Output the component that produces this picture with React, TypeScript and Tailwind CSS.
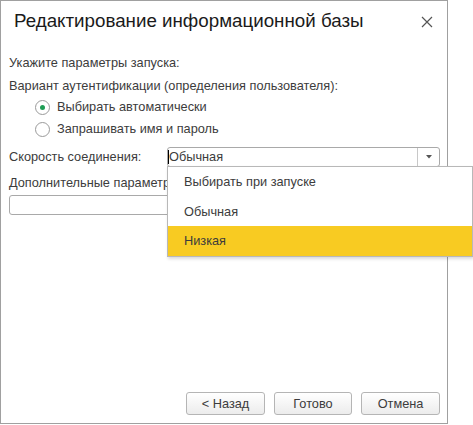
import React from "react";

const font = { fontFamily: '"Liberation Sans", Arial, sans-serif' };

function Radio({ checked, label }: { checked?: boolean; label: string }) {
  return (
    <div className="flex items-center h-[22px] pl-[26px]">
      <div className="w-[15px] h-[15px] rounded-full border border-[#9a9a9a] bg-white flex items-center justify-center">
        {checked && <div className="w-[5px] h-[5px] rounded-full bg-[#1f9d55]" />}
      </div>
      <span className="ml-[7px] text-[12.75px] text-[#3c3c3c]">{label}</span>
    </div>
  );
}

function Btn({ label, w }: { label: string; w: string }) {
  return (
    <div
      className={`${w} h-[23px] rounded-[3px] border border-[#b5b5b5] bg-gradient-to-b from-[#ffffff] to-[#ececec] flex items-center justify-center text-[12.75px] text-[#3c3c3c]`}
    >
      {label}
    </div>
  );
}

export default function App() {
  return (
    <div className="w-[473px] h-[425px] bg-white relative" style={font}>
      <div className="w-[448px] h-[424px] border border-[#a0a0a0] bg-white flex flex-col">
        <div className="h-[41px] flex items-center justify-between pl-[13px] pr-[14px]">
          <span className="text-[18.75px] text-[#1a1a1a]">Редактирование информационной базы</span>
          <svg width="12" height="12" viewBox="0 0 12 12">
            <path d="M1 1L11 11M11 1L1 11" stroke="#555" strokeWidth="1.2" />
          </svg>
        </div>
        <div className="flex flex-col pl-[8px] pr-[7px] flex-1">
          <div className="h-[12px]" />
          <div className="h-[17px] flex items-center text-[12.75px] text-[#3c3c3c]">Укажите параметры запуска:</div>
          <div className="h-[6px]" />
          <div className="h-[17px] flex items-center text-[12.75px] text-[#3c3c3c]">Вариант аутентификации (определения пользователя):</div>
          <div className="h-[2px]" />
          <Radio checked label="Выбирать автоматически" />
          <Radio label="Запрашивать имя и пароль" />
          <div className="h-[7px]" />
          <div className="h-[20px] flex items-center">
            <span className="w-[158px] text-[12.75px] text-[#3c3c3c]">Скорость соединения:</span>
            <div className="flex-1 h-[20px] rounded-[3px] border border-[#a9a9a9] flex">
              <div className="flex-1 flex items-center text-[12.75px] text-[#3c3c3c]">
                <span className="w-[1px] h-[14px] bg-black" />
                Обычная
              </div>
              <div className="w-[22px] border-l border-[#c8c8c8] flex items-center justify-center">
                <svg width="6" height="4" viewBox="0 0 6 4">
                  <path d="M0 0H6L3 3.5Z" fill="#555" />
                </svg>
              </div>
            </div>
          </div>
          <div className="h-[7px]" />
          <div className="h-[17px] flex items-center text-[12.75px] text-[#3c3c3c]">Дополнительные параметры запуска:</div>
          <div className="h-[4px]" />
          <div className="h-[20px] rounded-[3px] border border-[#a9a9a9]" />
          <div className="flex-1" />
          <div className="flex justify-end gap-[9px] pb-[8px]">
            <Btn label="< Назад" w="w-[79px]" />
            <Btn label="Готово" w="w-[78px]" />
            <Btn label="Отмена" w="w-[79px]" />
          </div>
        </div>
      </div>
      <div className="absolute left-[167px] top-[166px] w-[306px] h-[91px] bg-white border border-[#b8b8b8] shadow-[1px_2px_3px_rgba(0,0,0,0.15)] flex flex-col">
        <div className="h-[30px] flex items-center pl-[16px] text-[12.75px] text-[#3c3c3c]">Выбирать при запуске</div>
        <div className="h-[29px] flex items-center pl-[16px] text-[12.75px] text-[#3c3c3c]">Обычная</div>
        <div className="h-[30px] flex items-center pl-[16px] text-[12.75px] text-[#3c3c3c] bg-[#f8cb22]">Низкая</div>
      </div>
    </div>
  );
}
